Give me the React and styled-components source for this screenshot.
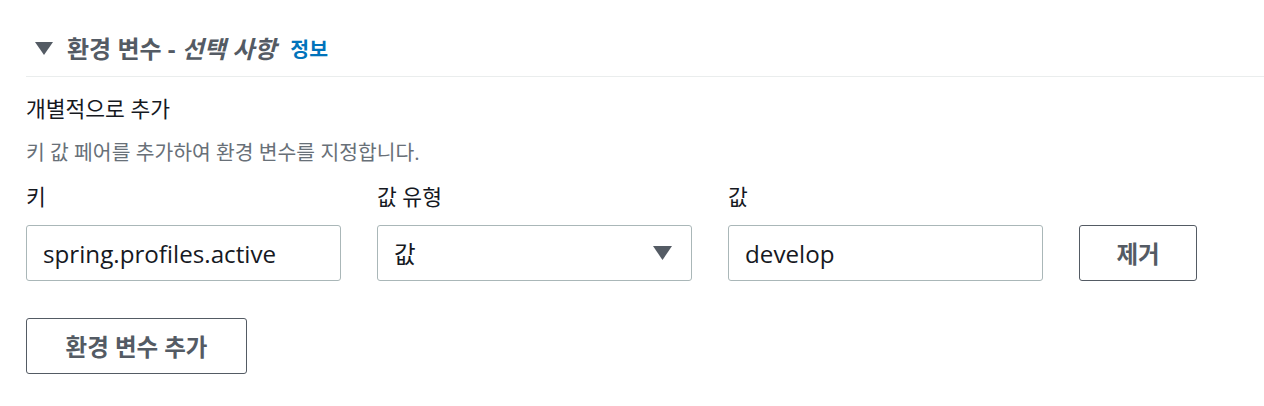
import styled, { createGlobalStyle } from "styled-components";

const GlobalStyle = createGlobalStyle`
  body {
    margin: 0;
    background: #fff;
    font-family: "Open Sans", "Noto Sans CJK KR", sans-serif;
    color: #16191f;
  }
`;

export default function App() {
  return (
    <>
      <GlobalStyle />
      <Page>
        <Header>
          <Caret viewBox="0 0 18 13">
            <path d="M0 0h18L9 13z" fill="#545b64" />
          </Caret>
          <Title>
            환경 변수 - <em>선택 사항</em>
          </Title>
          <InfoLink>정보</InfoLink>
        </Header>

        <Body>
          <SubTitle>개별적으로 추가</SubTitle>
          <Description>키 값 페어를 추가하여 환경 변수를 지정합니다.</Description>

          <Row>
            <Label>키</Label>
            <Label>값 유형</Label>
            <Label>값</Label>
            <span />

            <Input defaultValue="spring.profiles.active" />
            <Select>
              <span>값</span>
              <svg width="19" height="14" viewBox="0 0 19 14">
                <path d="M0 0h19L9.5 14z" fill="#545b64" />
              </svg>
            </Select>
            <Input defaultValue="develop" />
            <Button $width="118px">제거</Button>
          </Row>

          <Button $width="221px">환경 변수 추가</Button>
        </Body>
      </Page>
    </>
  );
}

const Page = styled.div`
  padding: 21px 0 0 26px;
`;

const Header = styled.div`
  display: flex;
  align-items: center;
  height: 55px;
  padding-left: 9px;
  border-bottom: 1px solid #eaeded;
`;

const Caret = styled.svg`
  width: 18px;
  height: 13px;
  margin-right: 14px;
`;

const Title = styled.h2`
  margin: 0;
  font-size: 24px;
  line-height: 30px;
  font-weight: 700;
  color: #545b64;

  em {
    font-style: italic;
  }
`;

const InfoLink = styled.a`
  margin-left: 14px;
  font-size: 20.5px;
  line-height: 30px;
  font-weight: 700;
  color: #0073bb;
  cursor: pointer;
`;

const Body = styled.div`
  padding-top: 20px;
`;

const SubTitle = styled.div`
  font-size: 21.5px;
  line-height: 24px;
  color: #16191f;
`;

const Description = styled.div`
  margin-top: 20px;
  font-size: 20.4px;
  line-height: 22px;
  color: #687078;
`;

const Row = styled.div`
  display: grid;
  grid-template-columns: 315px 315px 315px 118px;
  column-gap: 36px;
  row-gap: 16px;
  margin-top: 22px;
  margin-bottom: 37px;
`;

const Label = styled.div`
  font-size: 21.5px;
  line-height: 24px;
  color: #16191f;
`;

const fieldBox = `
  box-sizing: border-box;
  height: 56px;
  border: 1px solid #aab7b8;
  border-radius: 3px;
  background: #fff;
  padding: 0 16px;
  font-family: "Open Sans", "Noto Sans CJK KR", sans-serif;
  font-size: 24.2px;
  color: #16191f;
`;

const Input = styled.input`
  ${fieldBox}
  width: 100%;
  outline: none;
`;

const Select = styled.div`
  ${fieldBox}
  display: flex;
  align-items: center;
  justify-content: space-between;
  padding-right: 19px;
  font-size: 23.5px;
`;

const Button = styled.button`
  box-sizing: border-box;
  width: ${(p) => p.$width};
  height: 56px;
  border: 1px solid #545b64;
  border-radius: 3px;
  background: #fff;
  font-family: "Open Sans", "Noto Sans CJK KR", sans-serif;
  font-size: 23.5px;
  font-weight: 700;
  color: #545b64;
  cursor: pointer;
`;
